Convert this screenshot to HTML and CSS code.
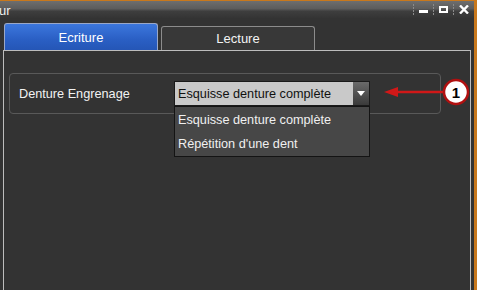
FILE: index.html
```html
<!DOCTYPE html>
<html>
<head>
<meta charset="utf-8">
<link rel="stylesheet" href="styles.css">
</head>
<body>
<div class="window">
  <div class="titlebar">
    <span class="title">ur</span>
    <div class="controls">
      <span class="sep"></span>
      <span class="ctl min"></span>
      <span class="sep"></span>
      <span class="ctl max"></span>
      <span class="sep"></span>
      <span class="ctl close">
        <svg width="10" height="9" viewBox="0 0 10 9"><path d="M1 0.5 L9 8.5 M9 0.5 L1 8.5" stroke="#fff" stroke-width="2.4"/></svg>
      </span>
    </div>
  </div>
  <div class="body">
    <div class="tabs">
      <div class="tab active">Ecriture</div>
      <div class="tab">Lecture</div>
    </div>
    <div class="panel">
      <div class="group">
        <span class="label">Denture Engrenage</span>
        <div class="combo">
          <span class="combo-text">Esquisse denture complète</span>
          <span class="combo-btn">
            <svg width="8" height="5" viewBox="0 0 8 5"><path d="M0 0 H8 L4 5 Z" fill="#fff"/></svg>
          </span>
          <ul class="list">
            <li>Esquisse denture complète</li>
            <li>Répétition d'une dent</li>
          </ul>
        </div>
      </div>
      <div class="callout">
        <svg width="90" height="30" viewBox="0 0 90 30">
          <line x1="12" y1="15" x2="60" y2="15" stroke="#d01818" stroke-width="2.5"/>
          <path d="M1 15 L15 10 L15 20 Z" fill="#d01818"/>
          <circle cx="73" cy="15" r="12" fill="#fff" stroke="#b01010" stroke-width="2.5"/>
          <text x="73" y="20.5" text-anchor="middle" class="num">1</text>
        </svg>
      </div>
    </div>
  </div>
</div>
</body>
</html>
```
FILE: styles.css
```css
* { box-sizing: border-box; }
html, body { margin: 0; padding: 0; }
body {
  width: 477px;
  height: 290px;
  overflow: hidden;
  background: #333333;
  font-family: "Liberation Sans", Arial, sans-serif;
}
.window {
  width: 477px;
  height: 290px;
  border-top: 1px solid #c8781c;
  border-right: 3px solid #c8781c;
  background: #333333;
  display: flex;
  flex-direction: column;
  position: relative;
}
.titlebar {
  height: 17px;
  background: linear-gradient(#6e6e6e 0%, #5c5c5c 45%, #3e3e3e 60%, #343434 100%);
  display: flex;
  align-items: center;
  justify-content: space-between;
  color: #f0f0f0;
}
.title {
  font-size: 13px;
  margin-left: -1px;
  margin-top: 1px;
}
.controls {
  display: flex;
  align-items: center;
  gap: 5px;
  margin-right: 5px;
  height: 100%;
}
.sep {
  width: 1px;
  height: 11px;
  background: repeating-linear-gradient(#8a8a8a 0 2px, transparent 2px 3px);
}
.ctl { display: block; }
.min { width: 9px; height: 3px; background: #fff; margin-top: 4px; }
.max { width: 9px; height: 7px; border: 2px solid #fff; }
.close { display: flex; }
.body {
  flex: 1;
  display: flex;
  flex-direction: column;
  padding: 5px 3px 0 3px;
}
.tabs {
  display: flex;
  align-items: flex-end;
  height: 27px;
  gap: 3px;
  padding-left: 1px;
}
.tab {
  width: 154px;
  height: 24px;
  border: 1px solid #8c8c8c;
  border-bottom: none;
  border-radius: 3px 3px 0 0;
  background: #383838;
  color: #f4f4f4;
  font-size: 13px;
  display: flex;
  align-items: center;
  justify-content: center;
}
.tab.active {
  height: 27px;
  background: linear-gradient(#3c77dd, #2a5fc4 60%, #2556b6);
  border-color: #9aa8c8;
  color: #fff;
}
.panel {
  flex: 1;
  border: 1px solid #bdbdbd;
  border-bottom: none;
  width: 468px;
  position: relative;
  padding: 22px 29px 0 5px;
}
.group {
  height: 41px;
  border: 1px solid #595959;
  border-radius: 4px;
  display: flex;
  align-items: center;
  padding-left: 9px;
}
.label {
  color: #f2f2f2;
  font-size: 12.7px;
  width: 155px;
}
.combo {
  position: relative;
  width: 196px;
  height: 25px;
  border: 1px solid #1a1a1a;
  background: #c9c9c9;
  display: flex;
  align-items: center;
}
.combo-text {
  flex: 1;
  color: #111;
  font-size: 12.7px;
  padding-left: 3px;
}
.combo-btn {
  width: 16px;
  height: 23px;
  background: linear-gradient(#6a6a6a, #3a3a3a);
  display: flex;
  align-items: center;
  justify-content: center;
}
.list {
  position: absolute;
  left: -1px;
  top: 24px;
  width: 196px;
  margin: 0;
  padding: 0;
  list-style: none;
  background: #474747;
  border: 1px solid #141414;
  height: 51px;
}
.list li {
  color: #f0f0f0;
  font-size: 12.7px;
  height: 24px;
  line-height: 24px;
  padding-left: 3px;
}
.list li:first-child { margin-top: 1px; }
.callout {
  position: absolute;
  left: 379px;
  top: 26px;
  display: flex;
}
.num {
  font-weight: bold;
  font-size: 15px;
  fill: #000;
}
```
